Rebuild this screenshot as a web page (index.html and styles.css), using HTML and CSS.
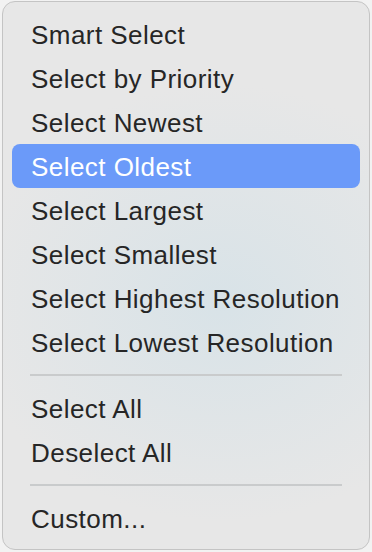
FILE: index.html
```html
<!DOCTYPE html>
<html lang="en">
<head>
    <meta charset="UTF-8">
    <meta name="viewport" content="width=device-width, initial-scale=1.0">
    <title>Select menu</title>
    <link rel="stylesheet" href="styles.css">
</head>
<body>
    <div class="menu">
        <div class="menu-item">Smart Select</div>
        <div class="menu-item">Select by Priority</div>
        <div class="menu-item">Select Newest</div>
        <div class="menu-item active">Select Oldest</div>
        <div class="menu-item">Select Largest</div>
        <div class="menu-item">Select Smallest</div>
        <div class="menu-item">Select Highest Resolution</div>
        <div class="menu-item">Select Lowest Resolution</div>
        <div class="separator"></div>
        <div class="menu-item">Select All</div>
        <div class="menu-item">Deselect All</div>
        <div class="separator"></div>
        <div class="menu-item">Custom...</div>
    </div>
</body>
</html>
```

FILE: styles.css
```css
html, body {
    margin: 0;
    height: 100%;
    background: #f2f2f2;
}
body {
    font-family: "Liberation Sans", Arial, sans-serif;
    padding: 1px 2px;
    box-sizing: border-box;
}
.menu {
    height: 549px;
    box-sizing: border-box;
    padding: 10px 9px;
    border: 1px solid #c4c4c4;
    border-radius: 13px;
    background:
        radial-gradient(ellipse 70% 40% at 60% 55%, rgba(210, 225, 232, 0.7), rgba(230, 230, 230, 0) 100%),
        #e7e7e7;
}
.menu-item {
    height: 44px;
    line-height: 46px;
    padding-left: 19px;
    font-size: 26px;
    letter-spacing: 0.45px;
    color: #262626;
    border-radius: 8px;
    white-space: nowrap;
}
.menu-item.active {
    background: #6b9af9;
    color: #ffffff;
}
.separator {
    height: 2px;
    margin: 10px 18px 10px 18px;
    background: #c9cbcc;
}
```
